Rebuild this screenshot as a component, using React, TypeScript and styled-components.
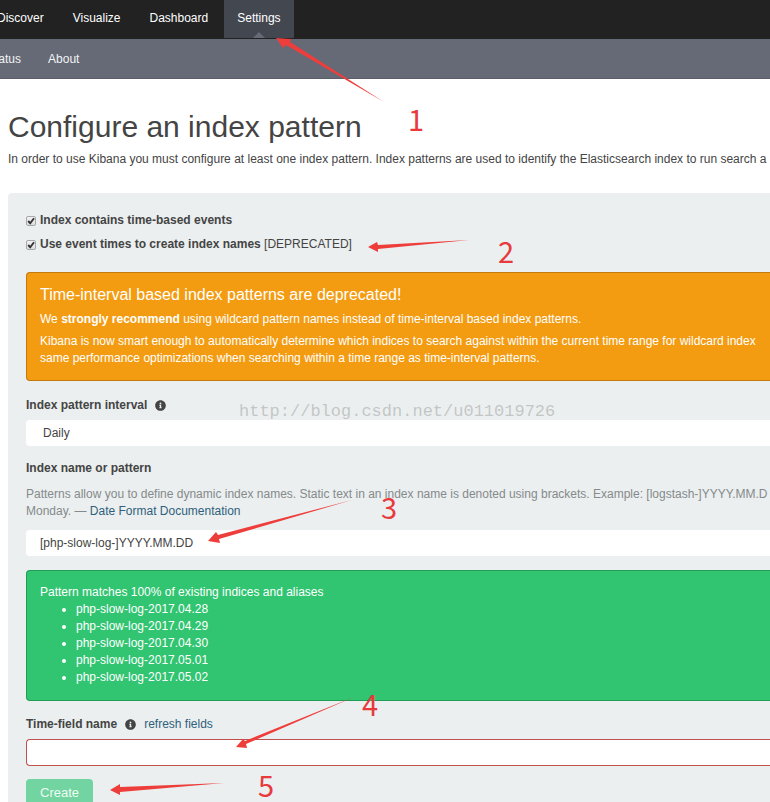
import React from "react";
import styled, { createGlobalStyle } from "styled-components";
import { FaInfoCircle } from "react-icons/fa";

const GlobalStyle = createGlobalStyle`
  *, *::before, *::after { box-sizing: border-box; }
  body {
    margin: 0;
    background: #fff;
    color: #444;
    font: 12px/17px "Liberation Sans", Arial, sans-serif;
  }
  button, input, select { font: inherit; color: inherit; }
`;

const Page = styled.div`
  position: relative;
  height: 100vh;
  overflow: hidden;
`;

const NavBar = styled.nav`
  display: flex;
  gap: 3px;
  height: 39px;
  padding-bottom: 1px;
  margin-left: -16px;
  background: #222;
`;

const NavLink = styled.a<{ $active?: boolean }>`
  position: relative;
  padding: 10px 13px 0;
  color: #fff;
  text-decoration: none;
  background: ${(p) => (p.$active ? "#434750" : "transparent")};

  &::after {
    content: "";
    display: ${(p) => (p.$active ? "block" : "none")};
    position: absolute;
    bottom: 0;
    left: 50%;
    margin-left: -6px;
    border: 6px solid transparent;
    border-top: 0;
    border-bottom-color: #656a76;
  }
`;

const SubNav = styled.nav`
  display: flex;
  gap: 27px;
  height: 40px;
  padding-top: 12px;
  margin-left: -13px;
  background: #656a76;
  border-bottom: 1px solid #595d68;
`;

const SubLink = styled.a`
  color: #f2f3f5;
  text-decoration: none;
`;

const Main = styled.main`
  padding: 31px 0 0 8px;
`;

const Title = styled.h1`
  margin: 0 0 7px;
  font-size: 30px;
  line-height: 34px;
  font-weight: 400;
`;

const Line = styled.span`
  display: block;
  white-space: nowrap;
`;

const Intro = styled.p`
  margin: 0;
  overflow: hidden;
`;

const Panel = styled.form`
  margin-top: 25px;
  padding: 19px 0 24px 18px;
  background: #ebefef;
  border-top-left-radius: 4px;
  overflow: hidden;
`;

const CheckRow = styled.label`
  display: flex;
  align-items: center;
  gap: 4px;
  height: 17px;
  margin-bottom: 7px;
`;

const CheckBox = styled.span`
  display: inline-grid;
  width: 10px;
  height: 10px;

  input {
    grid-area: 1 / 1;
    appearance: none;
    width: 10px;
    height: 10px;
    margin: 0;
    border: 1px solid #a6a8a9;
    border-radius: 2px;
    background: linear-gradient(#f2f2f2, #dedede);
  }
  svg {
    grid-area: 1 / 1;
    width: 10px;
    height: 10px;
    pointer-events: none;
    visibility: hidden;
  }
  input:checked + svg { visibility: visible; }
`;

const Alert = styled.section<{ $kind: "warning" | "success" }>`
  padding: ${(p) => (p.$kind === "warning" ? "13px 13px 8px" : "13px 13px 14px")};
  margin: ${(p) => (p.$kind === "warning" ? "19px 0 16px" : "14px 0 15px")};
  color: #fff;
  border: 1px solid ${(p) => (p.$kind === "warning" ? "#c4790c" : "#1f9d55")};
  border-right: 0;
  border-radius: 4px 0 0 4px;
  background: ${(p) => (p.$kind === "warning" ? "#f39c12" : "#31c471")};
  overflow: hidden;
`;

const AlertTitle = styled.h2`
  margin: 0 0 8px;
  font-size: 16px;
  line-height: 17px;
  font-weight: 400;
`;

const AlertText = styled.p`
  margin: 0 0 5px;
`;

const IndexList = styled.ul`
  margin: 0;
  padding-left: 36px;
`;

const LabelRow = styled.div`
  display: flex;
  align-items: center;
  gap: 8px;
  height: 17px;
  margin-bottom: 6px;

  label { font-weight: 700; }
  svg { display: block; width: 11px; height: 11px; }
`;

const Select = styled.select`
  display: block;
  appearance: none;
  width: 100%;
  height: 26px;
  padding: 0 17px;
  border: 0;
  border-radius: 4px 0 0 4px;
  background: #fff;
  margin-bottom: 14px;
`;

const Input = styled.input<{ $invalid?: boolean }>`
  display: block;
  width: 100%;
  height: ${(p) => (p.$invalid ? "27px" : "26px")};
  padding: 0 14px;
  border: ${(p) => (p.$invalid ? "1px solid #c0504d" : "0")};
  border-right: 0;
  border-radius: 4px 0 0 4px;
  background: #fff;
`;

const Help = styled.p`
  margin: 9px 0 10px;
  color: #858a8c;
`;

const Link = styled.a`
  color: #2f5f7c;
  text-decoration: none;
`;

const CreateButton = styled.button`
  display: block;
  height: 27px;
  margin-top: 13px;
  padding: 0 14px;
  border: 0;
  border-radius: 4px;
  color: #eefbf3;
  background: #72d4a0;
  font-size: 13px;
`;

const Watermark = styled.div`
  position: absolute;
  left: 239px;
  top: 402px;
  color: rgba(120, 120, 120, 0.36);
  font: 17px/20px "Liberation Mono", monospace;
  pointer-events: none;
`;

const Arrows = styled.svg`
  position: absolute;
  left: 0;
  top: 0;
  pointer-events: none;
`;

const StepNumber = styled.span<{ $x: number; $y: number }>`
  position: absolute;
  left: ${(p) => p.$x}px;
  top: ${(p) => p.$y}px;
  color: #e8393c;
  font: 400 29px/32px "Noto Sans CJK SC", sans-serif;
  pointer-events: none;
`;

const indices = ["2017.04.28", "2017.04.29", "2017.04.30", "2017.05.01", "2017.05.02"];

const steps = [
  { n: 1, x: 408, y: 102 },
  { n: 2, x: 498, y: 234 },
  { n: 3, x: 381, y: 490 },
  { n: 4, x: 362, y: 687 },
  { n: 5, x: 258, y: 768 },
];

const arrows = [
  "M276 38 L291 39 L290 42 L384 102 L286 45 L283 48 Z",
  "M368 247 L377 242 L378 245 L469 240 L378 249 L378 252 Z",
  "M208 541 L216 532 L218 535 L352 500 L219 539 L220 543 Z",
  "M236 747 L243 739 L245 741 L354 697 L246 744 L247 748 Z",
  "M110 790 L120 784 L120 787 L224 783 L120 792 L120 795 Z",
];

function Check({ children }: { children: React.ReactNode }) {
  return (
    <CheckRow>
      <CheckBox>
        <input type="checkbox" defaultChecked />
        <svg viewBox="0 0 10 10">
          <path d="M2.2 5 L4.2 7.2 L8 2.2" fill="none" stroke="#333" strokeWidth="1.9" />
        </svg>
      </CheckBox>
      <span>{children}</span>
    </CheckRow>
  );
}

export default function App() {
  return (
    <Page>
      <GlobalStyle />
      <header>
        <NavBar>
          <NavLink href="#discover">Discover</NavLink>
          <NavLink href="#visualize">Visualize</NavLink>
          <NavLink href="#dashboard">Dashboard</NavLink>
          <NavLink href="#settings" $active>Settings</NavLink>
        </NavBar>
        <SubNav>
          <SubLink href="#status">Status</SubLink>
          <SubLink href="#about">About</SubLink>
        </SubNav>
      </header>
      <Main>
        <Title>Configure an index pattern</Title>
        <Intro>
          <Line>
            In order to use Kibana you must configure at least one index pattern. Index patterns are used to
            identify the Elasticsearch index to run search a
          </Line>
        </Intro>
        <Panel onSubmit={(e) => e.preventDefault()}>
          <Check><b>Index contains time-based events</b></Check>
          <Check><b>Use event times to create index names</b> [DEPRECATED]</Check>

          <Alert $kind="warning">
            <AlertTitle>Time-interval based index patterns are deprecated!</AlertTitle>
            <AlertText>
              We <strong>strongly recommend</strong> using wildcard pattern names instead of time-interval based
              index patterns.
            </AlertText>
            <AlertText>
              <Line>
                Kibana is now smart enough to automatically determine which indices to search against within the
                current time range for wildcard index
              </Line>
              <Line>
                same performance optimizations when searching within a time range as time-interval patterns.
              </Line>
            </AlertText>
          </Alert>

          <LabelRow>
            <label htmlFor="interval">Index pattern interval</label>
            <FaInfoCircle />
          </LabelRow>
          <Select id="interval" defaultValue="Daily">
            <option>Daily</option>
          </Select>

          <LabelRow>
            <label htmlFor="pattern">Index name or pattern</label>
          </LabelRow>
          <Help>
            <Line>
              Patterns allow you to define dynamic index names. Static text in an index name is denoted using
              brackets. Example: [logstash-]YYYY.MM.D
            </Line>
            <Line>
              Monday. — <Link href="#date-format">Date Format Documentation</Link>
            </Line>
          </Help>
          <Input id="pattern" type="text" defaultValue="[php-slow-log-]YYYY.MM.DD" />

          <Alert $kind="success">
            Pattern matches 100% of existing indices and aliases
            <IndexList>
              {indices.map((d) => (
                <li key={d}>php-slow-log-{d}</li>
              ))}
            </IndexList>
          </Alert>

          <LabelRow>
            <label htmlFor="time-field">Time-field name</label>
            <FaInfoCircle />
            <Link href="#refresh">refresh fields</Link>
          </LabelRow>
          <Input id="time-field" type="text" $invalid />
          <CreateButton type="submit">Create</CreateButton>
        </Panel>
      </Main>

      <Watermark>http://blog.csdn.net/u011019726</Watermark>
      <Arrows width="480" height="802" viewBox="0 0 480 802" aria-hidden="true">
        {arrows.map((d) => (
          <path key={d} d={d} fill="#ee3e3c" />
        ))}
      </Arrows>
      {steps.map((s) => (
        <StepNumber key={s.n} $x={s.x} $y={s.y}>{s.n}</StepNumber>
      ))}
    </Page>
  );
}
